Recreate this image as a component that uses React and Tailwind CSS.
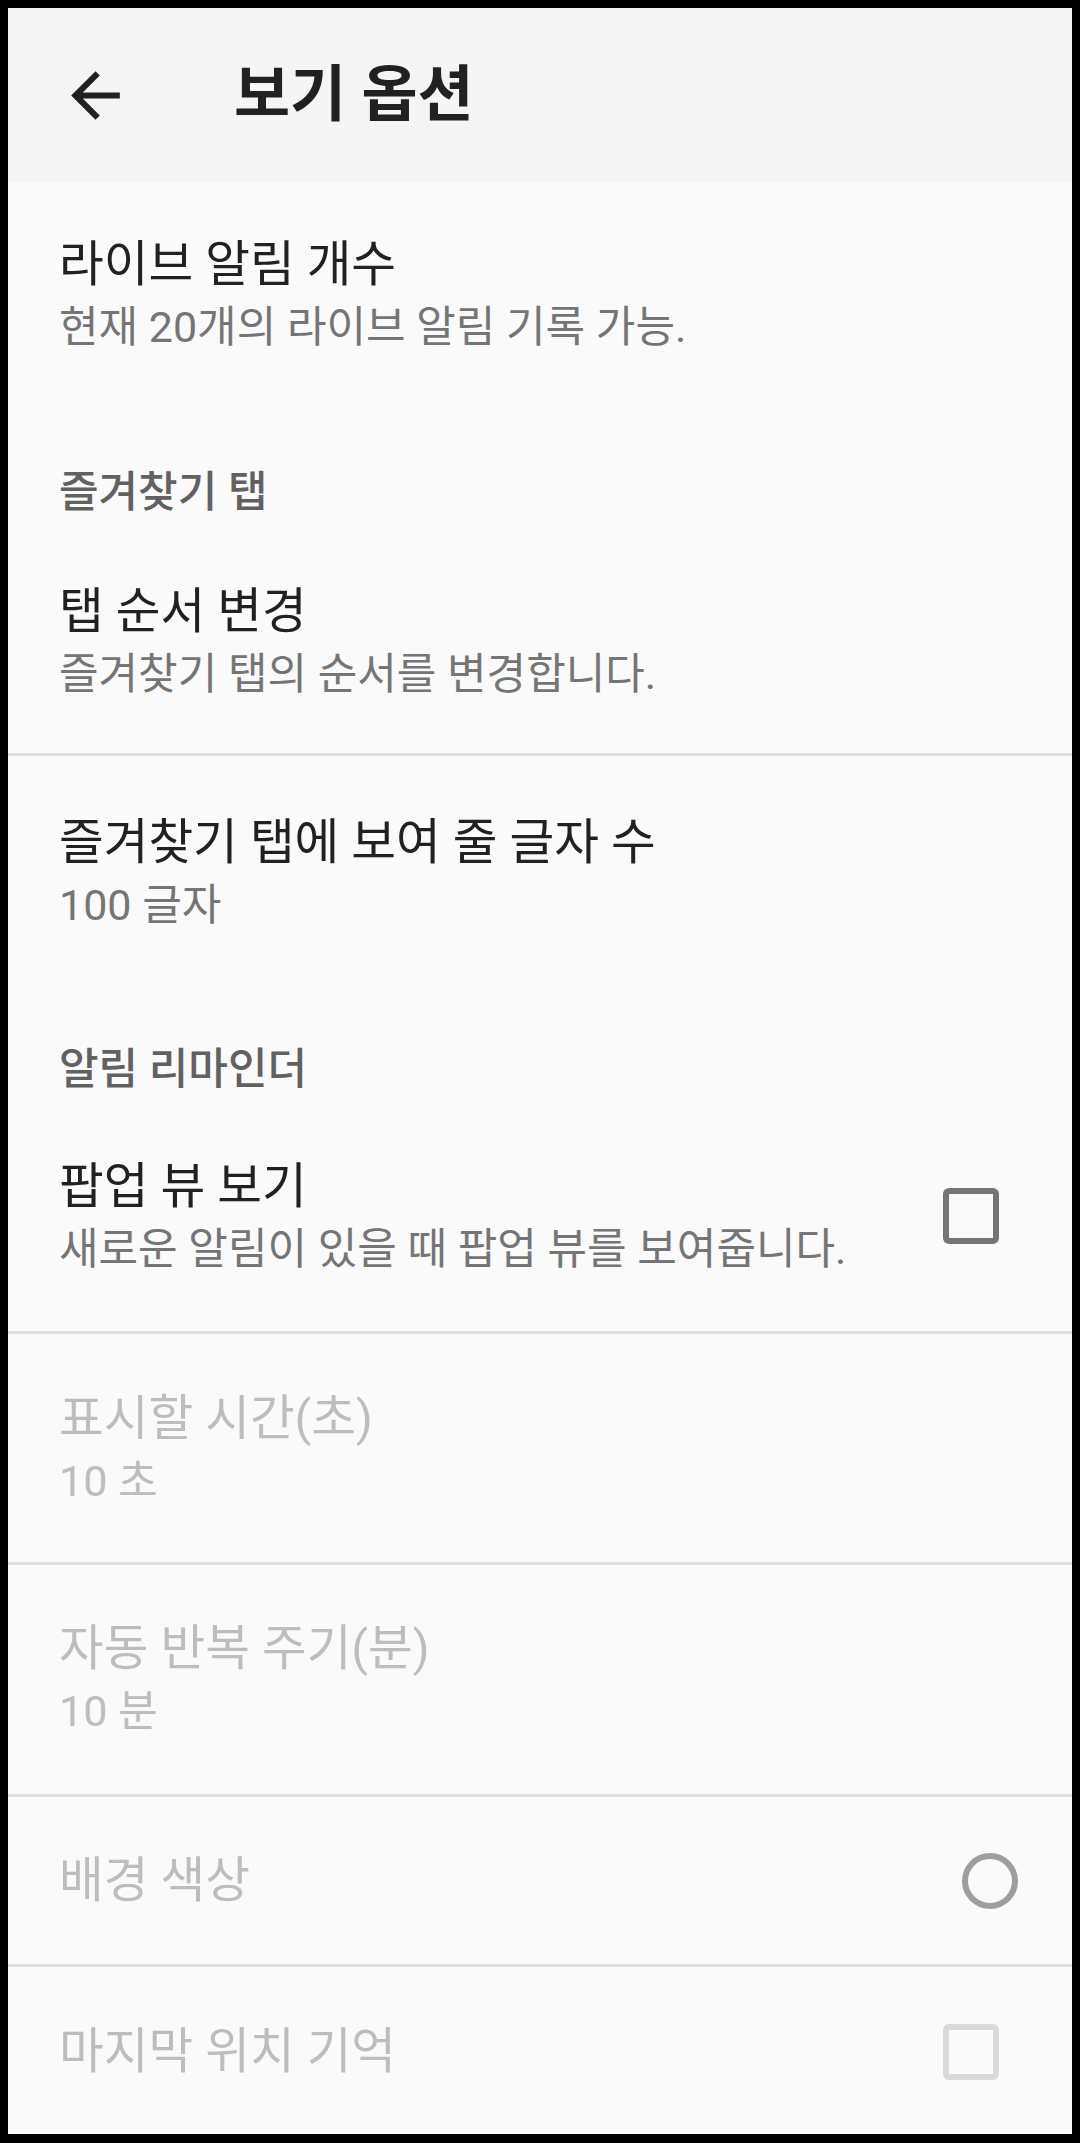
import React from 'react'

const font = "font-[Roboto,'Noto_Sans_CJK_KR',sans-serif]"

function BackArrow() {
  return (
    <svg width="73" height="73" viewBox="0 0 24 24" className="shrink-0">
      <path d="M20 11H7.83l5.59-5.59L12 4l-8 8 8 8 1.41-1.41L7.83 13H20v-2z" fill="#212121" />
    </svg>
  )
}

function Checkbox({ disabled }) {
  return (
    <div
      className={
        'w-[56px] h-[56px] rounded-[6px] border-[6px] mr-[73px] shrink-0 ' +
        (disabled ? 'border-[#d9d9d9]' : 'border-[#757575]')
      }
    />
  )
}

function Radio() {
  return <div className="w-[56px] h-[56px] rounded-full border-[6px] border-[#9e9e9e] mr-[54px] shrink-0" />
}

function Divider() {
  return <div className="h-[3px] bg-[#e0e0e0] shrink-0" />
}

function Category({ children, className }) {
  return (
    <div className={'pl-[51px] shrink-0 ' + className}>
      <div className="text-[43px] leading-[58px] font-medium text-[#616161]">{children}</div>
    </div>
  )
}

function Pref({ title, summary, disabled, widget, className }) {
  return (
    <div className={'flex items-center pl-[51px] shrink-0 ' + className}>
      <div className="flex-1 min-w-0">
        <div className={'text-[48.6px] leading-[66px] ' + (disabled ? 'text-[#bdbdbd]' : 'text-[#212121]')}>
          {title}
        </div>
        {summary && (
          <div className={'text-[43px] leading-[58px] ' + (disabled ? 'text-[#bdbdbd]' : 'text-[#757575]')}>
            {summary}
          </div>
        )}
      </div>
      {widget}
    </div>
  )
}

export default function App() {
  return (
    <div className={'w-[1080px] h-[2143px] bg-black pt-[8px] px-[8px] ' + font}>
      <div className="h-[2126px] bg-[#fafafa] flex flex-col overflow-hidden">
        <div className="h-[174px] bg-[#f5f5f5] flex items-center pl-[51px] shrink-0">
          <BackArrow />
          <div className="ml-[102px] text-[61px] leading-[80px] font-bold text-[#212121]">보기 옵션</div>
        </div>

        <Pref title="라이브 알림 개수" summary="현재 20개의 라이브 알림 기록 가능." className="pt-[50px]" />

        <Category className="pt-[107px]">즐겨찾기 탭</Category>
        <Pref title="탭 순서 변경" summary="즐겨찾기 탭의 순서를 변경합니다." className="pt-[58px] pb-[50px]" />
        <Divider />
        <Pref title="즐겨찾기 탭에 보여 줄 글자 수" summary="100 글자" className="pt-[54px]" />

        <Category className="pt-[106px]">알림 리마인더</Category>
        <Pref
          title="팝업 뷰 보기"
          summary="새로운 알림이 있을 때 팝업 뷰를 보여줍니다."
          widget={<Checkbox />}
          className="pt-[56px] pb-[53px]"
        />
        <Divider />
        <Pref title="표시할 시간(초)" summary="10 초" disabled className="pt-[52px] pb-[52px]" />
        <Divider />
        <Pref title="자동 반복 주기(분)" summary="10 분" disabled className="pt-[51px] pb-[54px]" />
        <Divider />
        <Pref title="배경 색상" disabled widget={<Radio />} className="pt-[51px] pb-[50px]" />
        <Divider />
        <Pref title="마지막 위치 기억" disabled widget={<Checkbox disabled />} className="pt-[52px] pb-[50px]" />
      </div>
    </div>
  )
}
